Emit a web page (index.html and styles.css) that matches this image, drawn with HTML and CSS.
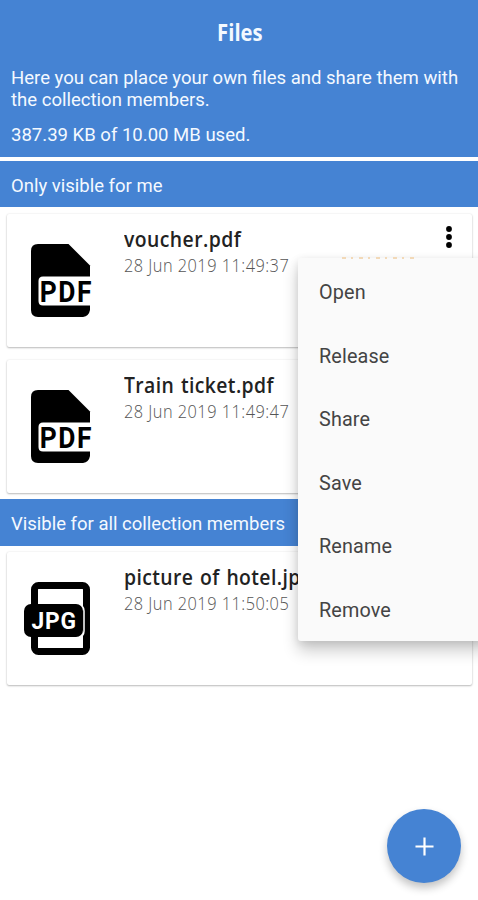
FILE: index.html
```html
<!DOCTYPE html>
<html lang="en">
<head>
<meta charset="utf-8">
<meta name="viewport" content="width=device-width, initial-scale=1">
<title>Files</title>
<link rel="stylesheet" href="styles.css">
</head>
<body>
<div class="screen">
  <header class="top">
    <h1><span>Files</span></h1>
    <p>Here you can place your own files and share them with the collection members.</p>
    <p>387.39 KB of 10.00 MB used.</p>
  </header>
  <h2 class="section">Only visible for me</h2>
  <article class="card">
    <svg class="icon" viewBox="0 0 70 76">
      <path d="M14 1h30.500l21.500 21.500v44.500q-1 6-7 7H14q-7 0-7-7V8q0-7 7-7z"/>
      <path fill="#fff" d="M67 33.500H19q-4.500 0-4.500 4.500v20q0 4.500 4.500 4.500h48z"/>
      <text class="pdf-label" transform="translate(15.700 59) scale(.88 1)">PDF</text>
    </svg>
    <div class="info">
      <h3 class="voucher">voucher.pdf</h3>
      <time>28 Jun 2019 11:49:37</time>
    </div>
    <svg class="more" viewBox="0 0 8 24"><circle cx="4" cy="4" r="2.9"/><circle cx="4" cy="12" r="2.9"/><circle cx="4" cy="20" r="2.9"/></svg>
    <span class="peek"></span>
    <ul class="menu">
      <li>Open</li>
      <li>Release</li>
      <li>Share</li>
      <li>Save</li>
      <li>Rename</li>
      <li>Remove</li>
    </ul>
  </article>
  <article class="card">
    <svg class="icon" viewBox="0 0 70 76">
      <path d="M14 1h30.500l21.500 21.500v44.500q-1 6-7 7H14q-7 0-7-7V8q0-7 7-7z"/>
      <path fill="#fff" d="M67 33.500H19q-4.500 0-4.500 4.500v20q0 4.500 4.500 4.500h48z"/>
      <text class="pdf-label" transform="translate(15.700 59) scale(.88 1)">PDF</text>
    </svg>
    <div class="info">
      <h3 class="train">Train ticket.pdf</h3>
      <time>28 Jun 2019 11:49:47</time>
    </div>
  </article>
  <h2 class="section second">Visible for all collection members</h2>
  <article class="card last">
    <svg class="icon" viewBox="0 0 70 76">
      <rect x="10.500" y="4.500" width="52" height="66" rx="4" fill="none" stroke="#000" stroke-width="7"/>
      <path fill="none" stroke="#fff" stroke-width="1.500" d="M53 23q7 1 7 7v20q0 6-7 7"/>
      <rect x="0" y="23" width="59" height="33" rx="7"/>
      <text class="jpg-label" transform="translate(7.500 47.500) scale(.95 1)">JPG</text>
    </svg>
    <div class="info">
      <h3 class="picture">picture of hotel.jp</h3>
      <time>28 Jun 2019 11:50:05</time>
    </div>
  </article>
  <button class="fab" aria-label="Add"><svg viewBox="0 0 20 20"><path d="M10 .5v19M.5 10h19"/></svg></button>
</div>
</body>
</html>
```
FILE: styles.css
```css
* { box-sizing: border-box; margin: 0; padding: 0; }

body {
  background: #fff;
  font-family: Roboto, sans-serif;
  color: #222;
}

.screen {
  position: relative;
  width: 478px;
  height: 900px;
  overflow: hidden;
}

.top {
  height: 157px;
  padding: 17px 11px 0;
  background: #4583d3;
  color: #f4f9ff;
}

.top h1 {
  height: 30px;
  margin-bottom: 20px;
  padding-left: 2px;
  font: 700 23px/30px "Open Sans", sans-serif;
  text-align: center;
}

.top h1 span { display: inline-block; transform: scaleX(.88); }

.top p {
  margin-bottom: 13px;
  font-size: 18.55px;
  line-height: 22px;
}

.section {
  height: 46px;
  margin-top: 4px;
  padding-left: 11px;
  background: #4583d3;
  color: #f4f9ff;
  font-size: 18.5px;
  font-weight: 400;
  line-height: 50px;
}

.section.second { height: 47px; margin-top: 6px; }

.card {
  position: relative;
  display: flex;
  width: 465px;
  height: 133px;
  margin: 7px 0 0 7px;
  padding-left: 17px;
  background: #fff;
  border-radius: 2px;
  box-shadow: 0 1px 2px rgba(0, 0, 0, .25), 0 0 2px rgba(0, 0, 0, .1);
}

.card + .card { margin-top: 13px; }
.card.last { margin-top: 6px; }

.icon { width: 70px; height: 76px; margin-top: 29px; flex: none; }

.pdf-label { font: 700 30px Roboto, sans-serif; letter-spacing: 1.8px; }
.jpg-label { font: 700 24px Roboto, sans-serif; letter-spacing: .8px; fill: #fff; }

.info { margin: 10px 0 0 30px; white-space: nowrap; }

.info h3 {
  font: 600 22px/28px "Open Sans", sans-serif;
  transform: scaleX(.88);
  transform-origin: left;
}

.info .voucher { letter-spacing: .5px; }
.info .train { letter-spacing: .45px; word-spacing: 1.5px; }
.info .picture { letter-spacing: .45px; word-spacing: 1.5px; }

.info time {
  display: block;
  margin-top: 1px;
  color: #555;
  font: 300 19px/24px "Open Sans", sans-serif;
  letter-spacing: .55px;
  transform: scaleX(.86);
  transform-origin: left;
}

.more { position: absolute; top: 11px; right: 19px; width: 8px; height: 24px; }

.peek {
  position: absolute;
  z-index: 3;
  top: 43px;
  left: 335px;
  width: 72px;
  height: 2px;
  background: repeating-linear-gradient(90deg, #f2d9b8 0 4px, transparent 4px 9px, #f2d9b8 9px 11px, transparent 11px 17px);
}

.menu {
  position: absolute;
  z-index: 2;
  top: 44px;
  left: 291px;
  width: 190px;
  height: 383px;
  padding: 2px 0 0 21px;
  background: #fafafa;
  border-radius: 3px;
  box-shadow: 0 10px 16px rgba(0, 0, 0, .2), 0 2px 9px rgba(0, 0, 0, .1);
  list-style: none;
}

.menu li {
  height: 63.6px;
  color: #444;
  font-size: 19.8px;
  line-height: 66px;
  letter-spacing: .15px;
}

.fab {
  position: absolute;
  right: 17px;
  bottom: 17px;
  display: grid;
  place-items: center;
  width: 74px;
  height: 74px;
  border: 0;
  border-radius: 50%;
  background: #4583d3;
  box-shadow: 0 5px 9px rgba(0, 0, 0, .24);
}

.fab svg { width: 19px; height: 19px; fill: none; stroke: #fff; stroke-width: 2.3; }
```
